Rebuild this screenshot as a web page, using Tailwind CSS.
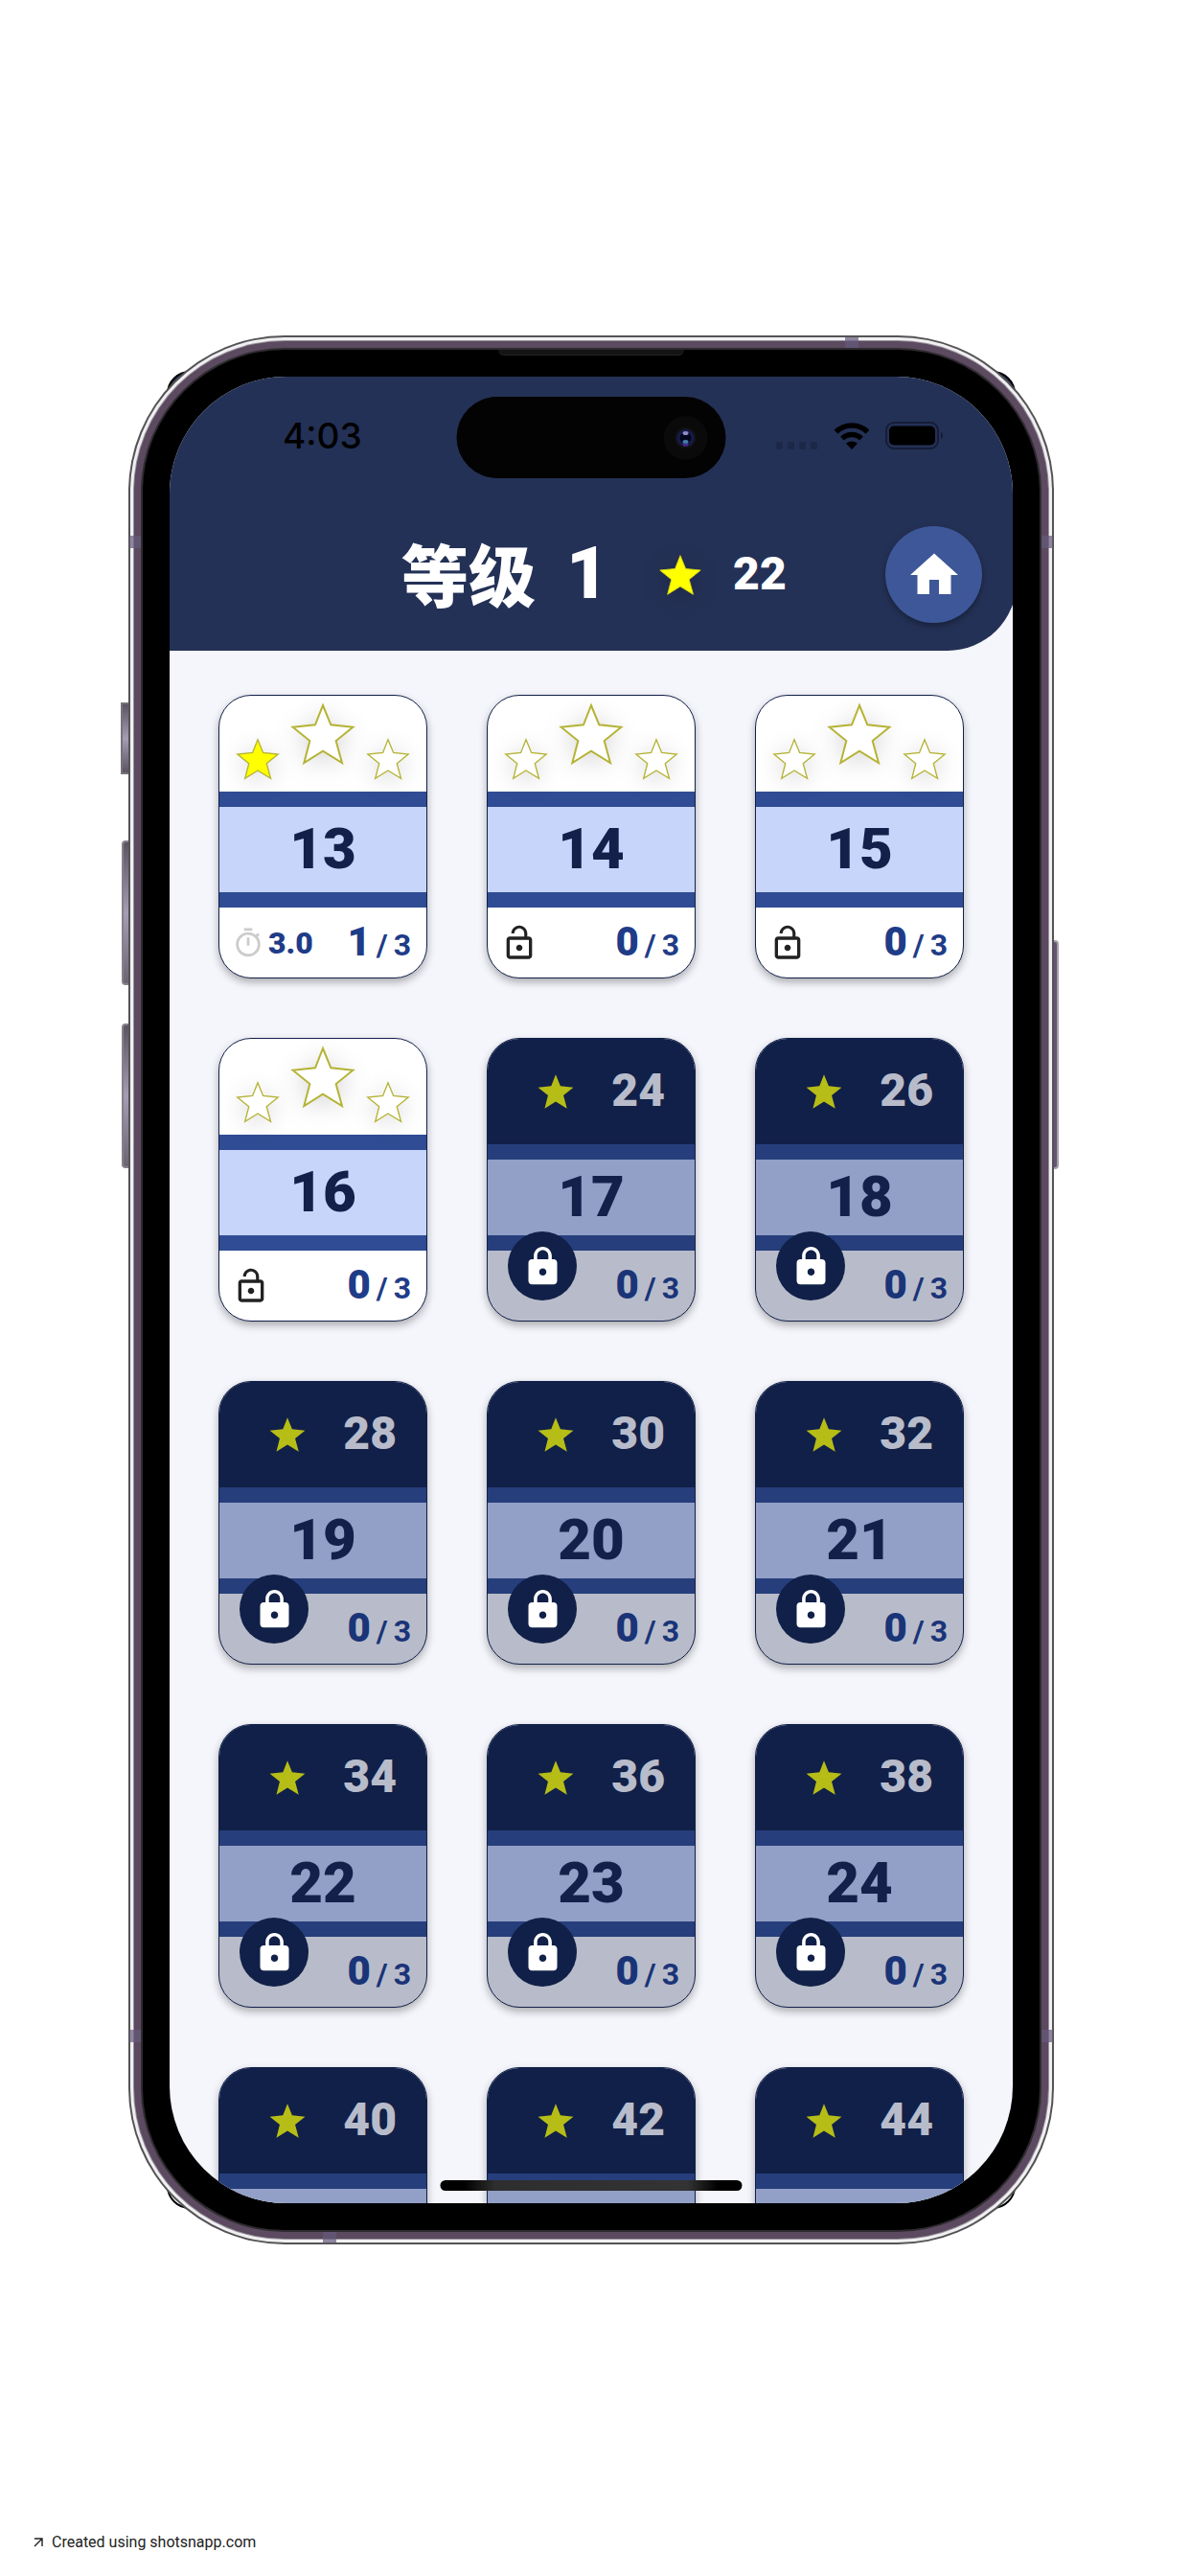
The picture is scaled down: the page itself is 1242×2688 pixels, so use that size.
<!DOCTYPE html>
<html lang="zh">
<head>
<meta charset="utf-8">
<meta name="viewport" content="width=device-width, initial-scale=1">
<title>等级 1</title>
<script src="https://cdn.jsdelivr.net/npm/@tailwindcss/browser@4"></script>
</head>
<body class="bg-white">
<svg class="hidden" aria-hidden="true">
  <symbol id="star" viewBox="278 94 204 200"><path stroke-miterlimit="10" d="M380 104 405 165 474 172 421 215 440 284 380 247 321 284 339 215 286 172 356 165Z"/></symbol>
  <symbol id="lock" viewBox="0 0 24 24"><path d="M18 8h-1V6c0-2.76-2.24-5-5-5S7 3.24 7 6v2H6c-1.1 0-2 .9-2 2v10c0 1.1.9 2 2 2h12c1.1 0 2-.9 2-2V10c0-1.100-.9-2-2-2zm-6 9c-1.100 0-2-.9-2-2s.9-2 2-2 2 .9 2 2-.9 2-2 2zm3.100-9H8.900V6c0-1.710 1.390-3.100 3.100-3.100s3.100 1.390 3.100 3.100v2z"/></symbol>
  <symbol id="unlock" viewBox="0 0 24 24"><path d="M12 17c1.100 0 2-.9 2-2s-.9-2-2-2-2 .9-2 2 .9 2 2 2zm6-9h-1V6c0-2.760-2.240-5-5-5S7 3.240 7 6h1.900c0-1.710 1.390-3.100 3.100-3.100s3.100 1.390 3.100 3.100v2H6c-1.100 0-2 .9-2 2v10c0 1.100.9 2 2 2h12c1.100 0 2-.9 2-2V10c0-1.100-.9-2-2-2zm0 12H6V10h12v10z"/></symbol>
  <symbol id="timer" viewBox="0 0 24 24"><path d="M15 1H9v2h6V1zm-4 13h2V8h-2v6zm8.030-6.610 1.420-1.420c-.43-.51-.9-.99-1.410-1.410l-1.420 1.420C16.070 4.740 14.120 4 12 4c-4.970 0-9 4.030-9 9s4.020 9 9 9 9-4.030 9-9c0-2.120-.74-4.070-1.970-5.610zM12 20c-3.870 0-7-3.130-7-7s3.130-7 7-7 7 3.130 7 7-3.130 7-7 7z"/></symbol>
</svg>

<div class="flex min-h-screen flex-col pt-[365px]">
  <div class="relative ml-[149px] mr-[157px] aspect-[936/1962] min-h-0 shrink-0">
    <!-- corners of the sheet behind the phone -->
    <div class="absolute inset-x-[25px] inset-y-[22px] rounded-[24px] border-2 border-black bg-linear-to-b from-[#243156] from-50% to-white to-50%"></div>

    <!-- side keys -->
    <div class="absolute -left-[23px] top-[368px] h-[75px] w-[9px] border-2 border-r-0 border-[#77737b] bg-linear-to-b from-[#5c5461] via-[#a69db4] to-[#5c5461]"></div>
    <div class="absolute -left-[22px] top-[512px] h-[151px] w-[8px] rounded-l-sm border-2 border-r-0 border-[#85818a] bg-linear-to-b from-[#5c5461] via-[#a69db4] to-[#6c6471]"></div>
    <div class="absolute -left-[22px] top-[703px] h-[151px] w-[8px] rounded-l-sm border-2 border-r-0 border-[#85818a] bg-linear-to-b from-[#5c5461] via-[#a69db4] to-[#6c6471]"></div>
    <div class="absolute -right-[20px] top-[616px] h-[239px] w-[7px] rounded-r-sm border-2 border-l-0 border-[#a3a0a6] bg-[#655478]"></div>

    <div class="relative h-full rounded-[148px] bg-black p-[28px] shadow-[0_0_0_2px_#2e2b2f,0_0_0_9px_#5c4a60,0_0_0_10px_#99939c,0_0_0_13px_#f0eff1,0_0_0_15px_#555355]">
      <div class="relative flex h-full flex-col overflow-hidden rounded-[122px] bg-[#f5f6fc]">
        <header class="-mr-1 shrink-0 rounded-br-[72px] bg-[#243156] pb-[29px] pl-[118px] pr-[36px] pt-[19px]">
          <div class="flex h-[85px] items-center pr-[39px] font-[Inter] text-[37px] font-medium leading-none text-black">
            <span>4:03</span>
            <div class="ml-auto flex items-center">
              <svg class="mr-4 h-[28px] w-[44px] fill-[#1d2848]" viewBox="0 0 44 28"><rect y="20" width="7" height="8" rx="2"/><rect x="12" y="20" width="7" height="8" rx="2"/><rect x="24" y="20" width="7" height="8" rx="2"/><rect x="36" y="20" width="7" height="8" rx="2"/></svg>
              <svg class="mr-4 h-[28px] w-[38px]" viewBox="0 0 38 28" fill="none" stroke="#000" stroke-width="5.500"><path d="M2.500 9.800a23.500 23.500 0 0 1 33 0"/><path d="M9 16.500a14.500 14.500 0 0 1 20 0"/><path d="M19 28l-6-6.200a8.700 8.700 0 0 1 12 0z" fill="#000" stroke="none"/></svg>
              <svg class="h-[29px] w-[62px]" viewBox="0 0 62 29"><rect x="1" y="1" width="54" height="27" rx="8" fill="none" stroke="#151d36" stroke-width="2"/><rect x="4" y="4.500" width="48" height="20" rx="5" fill="#000"/><path d="M58 10.500a5 5 0 0 1 0 8z" fill="#151d36"/></svg>
            </div>
          </div>
          <div class="mt-[52px] flex h-[101px] items-center pl-[124px] text-white">
            <h1 class="flex items-center gap-[32px] pb-1 font-['Noto_Sans_CJK_SC',sans-serif] text-[70px] font-black leading-none"><span>等级</span><span class="font-[Roboto] text-[76px]">1</span></h1>
            <svg class="ml-[52px] size-[46px] fill-[#ffff00] stroke-[#d8d810] stroke-4 drop-shadow-[0_4px_12px_rgb(0_0_0/0.2)]"><use href="#star"/></svg>
            <span class="ml-8 pb-0.5 font-[Roboto] text-5xl font-black leading-none">22</span>
            <button class="ml-auto flex size-[101px] items-center justify-center rounded-full bg-[#3d5798] shadow-[0_3px_6px_rgb(0_0_0/0.35)]" aria-label="主页">
              <svg class="size-[60px] fill-white" viewBox="0 0 24 24"><path d="M10 20v-6h4v6h5v-8h3L12 3 2 12h3v8z"/></svg>
            </button>
          </div>
        </header>
        <main id="levels" class="grid grid-cols-3 gap-[62px] px-[51px] pt-[46px]"></main>

        <div class="absolute bottom-[13px] left-1/2 h-[11px] w-[315px] -translate-x-1/2 rounded-full bg-[linear-gradient(90deg,#000_8%,#2e2e2e_18%,#333_82%,#000_92%)]"></div>
      </div>

      <!-- speaker slit and camera island -->
      <div class="absolute left-1/2 top-0 h-[6px] w-[194px] -translate-x-1/2 rounded-b-md border-b border-[#222] bg-[#141414]"></div>
      <div class="absolute left-1/2 top-[49px] flex h-[85px] w-[281px] -translate-x-1/2 items-center justify-end rounded-full bg-[#030303] pr-[19px]">
        <svg class="size-[46px]" viewBox="0 0 46 46"><circle cx="23" cy="23" r="23" fill="#0a0a0a"/><circle cx="23" cy="23" r="11" fill="#121214"/><circle cx="23" cy="23" r="9" fill="#161a4c"/><circle cx="23" cy="23" r="6" fill="#06061c"/><ellipse cx="23" cy="18" rx="3" ry="2" fill="#8f8cc4"/><ellipse cx="23" cy="27" rx="3" ry="2" fill="#3f7fa8"/><ellipse cx="23" cy="30" rx="3" ry="1.500" fill="#4a2a90"/></svg>
      </div>
    </div>

    <!-- antenna bands -->
    <div class="absolute -left-[14px] top-[194px] h-[13px] w-[12px] bg-[#655a7c]/70"></div>
    <div class="absolute -right-[14px] top-[194px] h-[13px] w-[12px] bg-[#655a7c]/70"></div>
    <div class="absolute -left-[14px] bottom-[196px] h-[13px] w-[12px] bg-[#655a7c]/70"></div>
    <div class="absolute -right-[14px] bottom-[196px] h-[13px] w-[12px] bg-[#655a7c]/70"></div>
    <div class="absolute -top-[13px] right-[189px] h-[11px] w-[14px] bg-[#655a7c]/70"></div>
    <div class="absolute -bottom-[13px] left-[188px] h-[11px] w-[14px] bg-[#655a7c]/70"></div>
  </div>

  <footer class="mt-auto flex items-center gap-[9px] pb-[23px] pl-[35px] text-[#222]">
    <svg class="size-[10px]" viewBox="0 0 10 10" fill="none" stroke="currentColor" stroke-width="1.400"><path d="M1 1h8v8M9 1 1 9"/></svg>
    <span class="font-[Roboto] text-base">Created using shotsnapp.com</span>
  </footer>
</div>

<script>
  const levels = [
    { n: 13, stars: 1, time: '3.0' }, { n: 14, stars: 0 }, { n: 15, stars: 0 }, { n: 16, stars: 0 },
    ...Array.from({ length: 8 }, (_, i) => ({ n: 17 + i, need: 24 + 2 * i })),
    { need: 40 }, { need: 42 }, { need: 44 },
  ];

  const outline = (size, filled) =>
    `<svg class="${size} ${filled ? 'fill-[#ffff00]' : 'fill-white'} stroke-[#b5b336] stroke-6 drop-shadow-[0_4px_12px_rgb(0_0_0/0.15)]"><use href="#star"/></svg>`;

  const score = stars =>
    `<span class="ml-auto flex items-baseline gap-[6px] pb-0.5 text-[32px] font-bold leading-none"><span class="text-[42px] font-black leading-none">${stars}</span><span>/</span><span>3</span></span>`;

  const openCard = l => `
    <button class="flex h-[296px] flex-col overflow-hidden rounded-[34px] border border-[#12204a] bg-white text-left font-[Roboto] font-black shadow-[0_4px_8px_rgb(0_0_0/0.3)]">
      <span class="flex h-[100px] w-full items-end justify-between px-[17px] pb-[11px]">
        ${outline('size-[46px]', l.stars > 0)}
        <span class="self-start pt-[6px]">${outline('size-[68px]', l.stars > 1)}</span>
        ${outline('size-[46px]', l.stars > 2)}
      </span>
      <span class="flex h-[121px] w-full items-center justify-center border-y-16 border-[#304c94] bg-[#c8d5fb] pb-0.5 text-[60px] leading-none text-[#12204a]">${l.n}</span>
      <span class="flex w-full grow items-center pl-[13px] pr-4 text-[#1f3c88]">
        ${l.time
          ? `<svg class="size-[34px] fill-[#cccccc]"><use href="#timer"/></svg><span class="pl-1 text-[32px] leading-none">${l.time}</span>`
          : `<svg class="size-[40px] fill-[#222]"><use href="#unlock"/></svg>`}
        ${score(l.stars)}
      </span>
    </button>`;

  // a card without a number is only peeking in at the bottom of the list
  const lockedCard = l => `
    <button class="relative flex h-[296px] flex-col overflow-hidden rounded-[34px] border border-[#12204a] bg-[#b8bcca] text-left font-[Roboto] font-black shadow-[0_4px_8px_rgb(0_0_0/0.3)]">
      <span class="flex h-[110px] w-full items-center justify-between bg-[#112048] pl-[51px] pr-[31px] text-5xl leading-none text-[#b8bcca]">
        <svg class="size-[40px] fill-[#b6bd16]"><use href="#star"/></svg>
        <span class="pb-0.5">${l.need}</span>
      </span>
      <span class="flex h-[111px] w-full items-center justify-center border-y-16 border-[#263e7b] bg-[#929fc6] pb-0.5 text-[60px] leading-none text-[#12204a]">${l.n ?? ''}</span>
      ${l.n ? `<span class="flex w-full grow items-center pr-4 text-[#1a3478]">${score(0)}</span>
      <span class="absolute bottom-[21px] left-[21px] flex size-[72px] items-center justify-center rounded-full bg-[#112048]">
        <svg class="size-[45px] fill-white"><use href="#lock"/></svg>
      </span>` : ''}
    </button>`;

  document.getElementById('levels').innerHTML = levels.map(l => l.need ? lockedCard(l) : openCard(l)).join('');
</script>
</body>
</html>
